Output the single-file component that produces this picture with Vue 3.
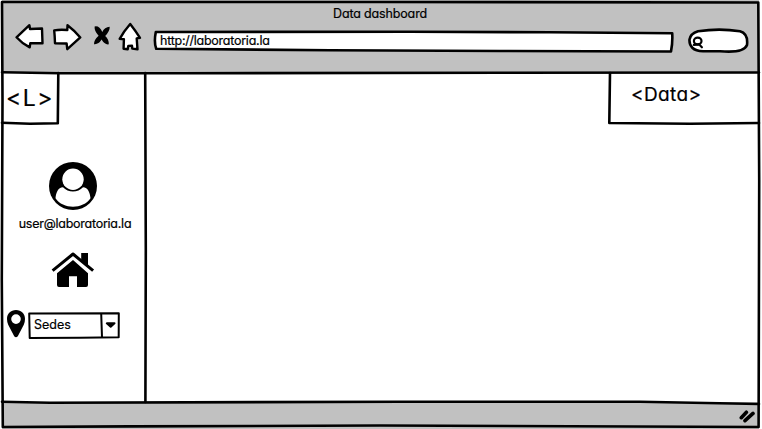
<script setup>
import { ref } from 'vue'

const title = ref('Data dashboard')
const address = ref('http://laboratoria.la')
const user = ref('user@laboratoria.la')
const places = ref('Sedes')
</script>

<template>
  <div class="browser">
    <header class="chrome">
      <div class="title">{{ title }}</div>
      <div class="toolbar">
        <svg class="nav" width="134" height="34" viewBox="12 20 134 34">
          <g class="ink white nav-ink">
            <path d="M16.5 37.3L29.4 25.2L30 29L42 28.5L42.5 43.3L30.3 43.2L29.7 47.4Q22 43.5 16.5 37.3Z" />
            <path d="M54.2 30.4Q60 29.2 67.3 30L67.5 25.2Q74.5 30.5 80.3 37.4L67.3 49.2L66.6 43.5L55 43.3Q54.8 36 54.2 30.4Z" />
            <path d="M130.2 24Q135.5 30.8 140 37.8L136.7 38.4L137.5 49.3L132.3 48.6L132 45.8L128.3 45.9L127.7 49.2L123.6 48.7L123.9 39.2L119.7 38.9Q124 31 130.2 24Z" />
          </g>
          <path d="M94.6 26.5Q99.5 25.5 102.3 32Q104.5 27 109.7 26.8Q110 31 105.2 36Q109 39.5 108.8 44.3Q104.6 45 101.6 39.6Q98.5 44.8 94 44.2Q93.9 40 98.6 35.8Q94.2 31 94.6 26.5Z" />
        </svg>
        <div class="address sketch-box">
          <svg width="522" height="24" viewBox="153 29 522 24" class="ink white">
            <path d="M155.8 32L410 31.8L550 32.2L672.2 33.2Q672.8 42 671 51.5L500 51L330 50.2L156.2 48.8Q153.8 42 155.8 32Z" />
          </svg>
          <span>{{ address }}</span>
        </div>
        <svg class="search" width="64" height="28" viewBox="686 27 64 28">
          <path class="ink white" d="M698 31.2Q720 28 740 31.3C746 33 747.8 38 747 45C744.5 51.5 733 52.4 720 51.2L703 51.3C693 51 689 46 689.5 39.5Q690.5 33.5 698 31.2Z" />
          <g class="glass"><ellipse cx="697.7" cy="41" rx="3.8" ry="3.3" /><path d="M693.9 44.8L699 44.3L701.9 47.3" /></g>
        </svg>
      </div>
    </header>

    <main class="workspace">
      <aside class="sidebar">
        <div class="brand">&lt;L&gt;</div>
        <div class="profile">
          <svg width="48" height="48" viewBox="0 0 48 48">
            <circle cx="24" cy="24" r="24" />
            <path fill="#fff" d="M14 25.3C9 25.3 7 31 6.5 36.2C14 47.5 34 47.5 41.5 36.2C41 31 39 25.3 34 25.3C29 31 19 31 14 25.3Z" />
            <circle cx="24" cy="17.3" r="10.7" fill="#fff" />
          </svg>
          <span>{{ user }}</span>
        </div>
        <svg class="home" width="44" height="36" viewBox="0 0 44 36">
          <path d="M6 21.3L22 8L37 21.3V33Q37 35 35 35H26V24.3H18V35H8Q6 35 6 33Z" />
          <path d="M1.6 18.7L22 2L42.1 18.7" fill="none" stroke="#000" stroke-width="3" stroke-linejoin="round" />
          <path d="M30.2 1H37V14L30.2 8.3Z" />
        </svg>
        <div class="places">
          <svg width="18" height="28" viewBox="0 0 18 28">
            <path fill-rule="evenodd" d="M9 0C3.8 0 0 3.7 0 9Q0 12 1.2 14.7L7.2 26.2Q9 28.3 10.8 26.2L16.8 14.7Q18 12 18 9C18 3.7 14.2 0 9 0ZM9 4.3A4.8 4.8 0 1 1 9 13.9A4.8 4.8 0 1 1 9 4.3Z" />
          </svg>
          <div class="select sketch-box">
            <svg width="92" height="28" viewBox="28 312 92 28" class="ink thin">
              <path d="M29.2 313.5L118.8 313.2L118.7 337.2L80 337.7L29.7 338Z M101.2 313.5L102 337.4" />
              <path class="solid" d="M106.8 323.3H114.5L110.7 326.8Z" />
            </svg>
            <span>{{ places }}</span>
          </div>
        </div>
      </aside>
      <section class="content">
        <div class="data">&lt;Data&gt;</div>
      </section>
    </main>

    <footer class="status">
      <svg width="18" height="15" viewBox="738 408 18 15">
        <path d="M741.3 417.7L746.4 412.2M745 420.7L753 413.4" fill="none" stroke="#000" stroke-width="3.6" stroke-linecap="round" />
      </svg>
    </footer>

    <svg class="outline ink" width="762" height="429" viewBox="0 0 762 429">
      <path d="M2 2L380 2L758.3 2.5L759.2 180L758.6 427L380 425.5L130 426.4L2.8 427L1.8 280L2.5 100Z" />
      <path d="M2 72.2L60 73.2L180 73.3L500 72.7L759 72.5" />
      <path d="M2 401.8L50 402.8L400 401.7L640 401.7L759 404" />
      <path d="M145.2 73L145.8 250L145.4 402" />
      <path d="M58.3 73L57.8 123.3L30 123.8L2 122.7" />
      <path d="M610 73L609.3 123L690 123.8L759 123" />
    </svg>
  </div>
</template>

<style>
body { background: #fff; }
</style>

<style scoped>
.browser {
  position: relative;
  display: grid;
  grid-template-rows: 73px 329px 27px;
  width: 762px;
  height: 429px;
  overflow: hidden;
  color: #000;
  font: 12.5px/16px Inter, "Liberation Sans", sans-serif;
  font-feature-settings: "cv11";
  -webkit-text-stroke: 0.2px #000;
}
svg { display: block; flex: none; }
.ink { fill: none; stroke: #000; stroke-width: 2.6; stroke-linejoin: round; stroke-linecap: round; }
.white { fill: #fff; }
.nav-ink { stroke-width: 2.4; }
.thin { stroke-width: 2; }
.solid { fill: #000; }
.glass { fill: none; stroke: #000; stroke-width: 2.2; stroke-linecap: round; }
.chrome, .status { margin: 0 3px 0 2px; background: #c1c1c1; }
.chrome { padding-top: 6px; }
.title { padding-right: 1px; text-align: center; letter-spacing: -0.15px; }
.toolbar { display: flex; align-items: flex-start; padding: 0 0 0 10px; }
.nav { margin-top: -2px; }
.address { margin: 7px 0 0 7px; }
.search { margin: 5px 0 0 11px; }
.sketch-box { display: grid; }
.sketch-box > * { grid-area: 1 / 1; }
.address span { padding: 4px 0 0 7px; letter-spacing: -0.25px; }
.workspace { display: grid; grid-template-columns: 146px 1fr; }
.sidebar { display: flex; flex-direction: column; }
.brand { height: 50px; padding-left: 6px; font-size: 23px; line-height: 51px; letter-spacing: 1.5px; }
.profile { display: flex; flex-direction: column; align-items: center; gap: 6px; padding-top: 39px; }
.profile span { padding-left: 4px; letter-spacing: -0.25px; }
.home { margin: 20px 0 0 51px; }
.places { display: flex; gap: 3px; margin: 23px 0 0 7px; }
.places > svg { margin-top: -1px; }
.select { margin-top: 1px; }
.select span { padding: 5px 0 0 6px; }
.content { display: flex; justify-content: flex-end; align-items: flex-start; }
.data { width: 131px; font-size: 19px; line-height: 43px; letter-spacing: 0.4px; }
.status { display: flex; justify-content: flex-end; padding: 6px 3px 0 0; }
.outline { position: absolute; inset: 0; pointer-events: none; }
</style>
